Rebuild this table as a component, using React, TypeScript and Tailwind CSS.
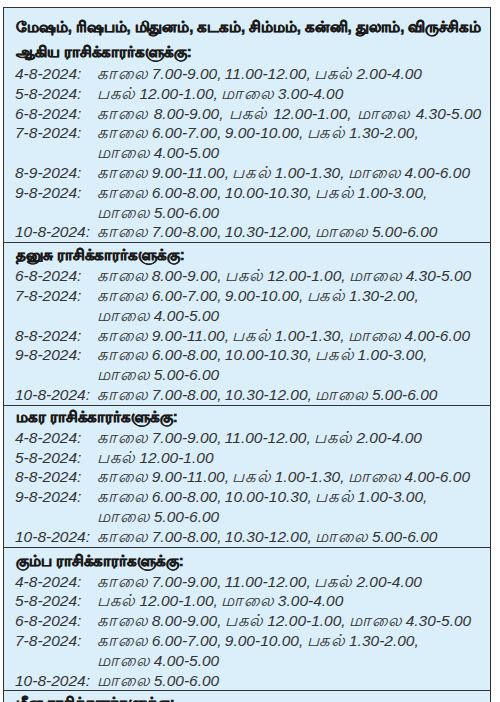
import React from 'react';

type Row = { date?: string; text: string; ws?: string };
type Section = { title: string[]; rows: Row[]; pad: string; lead: string };

const sections: Section[] = [
    {
        title: ['மேஷம், ரிஷபம், மிதுனம், கடகம், சிம்மம், கன்னி, துலாம், விருச்சிகம்', 'ஆகிய ராசிக்காரர்களுக்கு:'],
        pad: 'pt-[6px]',
        lead: 'leading-[25px]',
        rows: [
            { date: '4-8-2024:', text: 'காலை 7.00-9.00, 11.00-12.00, பகல் 2.00-4.00' },
            { date: '5-8-2024:', text: 'பகல் 12.00-1.00, மாலை 3.00-4.00' },
            { date: '6-8-2024:', text: 'காலை 8.00-9.00, பகல் 12.00-1.00, மாலை 4.30-5.00', ws: '[word-spacing:1px]' },
            { date: '7-8-2024:', text: 'காலை 6.00-7.00, 9.00-10.00, பகல் 1.30-2.00,' },
            { text: 'மாலை 4.00-5.00' },
            { date: '8-9-2024:', text: 'காலை 9.00-11.00, பகல் 1.00-1.30, மாலை 4.00-6.00' },
            { date: '9-8-2024:', text: 'காலை 6.00-8.00, 10.00-10.30, பகல் 1.00-3.00,' },
            { text: 'மாலை 5.00-6.00' },
            { date: '10-8-2024:', text: 'காலை 7.00-8.00, 10.30-12.00, மாலை 5.00-6.00' },
        ],
    },
    {
        title: ['தனுசு ராசிக்காரர்களுக்கு:'],
        pad: 'pt-[1px]',
        lead: 'leading-[22px]',
        rows: [
            { date: '6-8-2024:', text: 'காலை 8.00-9.00, பகல் 12.00-1.00, மாலை 4.30-5.00' },
            { date: '7-8-2024:', text: 'காலை 6.00-7.00, 9.00-10.00, பகல் 1.30-2.00,' },
            { text: 'மாலை 4.00-5.00' },
            { date: '8-8-2024:', text: 'காலை 9.00-11.00, பகல் 1.00-1.30, மாலை 4.00-6.00' },
            { date: '9-8-2024:', text: 'காலை 6.00-8.00, 10.00-10.30, பகல் 1.00-3.00,' },
            { text: 'மாலை 5.00-6.00' },
            { date: '10-8-2024:', text: 'காலை 7.00-8.00, 10.30-12.00, மாலை 5.00-6.00' },
        ],
    },
    {
        title: ['மகர ராசிக்காரர்களுக்கு:'],
        pad: 'pt-0',
        lead: 'leading-[22px]',
        rows: [
            { date: '4-8-2024:', text: 'காலை 7.00-9.00, 11.00-12.00, பகல் 2.00-4.00' },
            { date: '5-8-2024:', text: 'பகல் 12.00-1.00' },
            { date: '8-8-2024:', text: 'காலை 9.00-11.00, பகல் 1.00-1.30, மாலை 4.00-6.00' },
            { date: '9-8-2024:', text: 'காலை 6.00-8.00, 10.00-10.30, பகல் 1.00-3.00,' },
            { text: 'மாலை 5.00-6.00' },
            { date: '10-8-2024:', text: 'காலை 7.00-8.00, 10.30-12.00, மாலை 5.00-6.00' },
        ],
    },
    {
        title: ['கும்ப ராசிக்காரர்களுக்கு:'],
        pad: 'pt-[2px]',
        lead: 'leading-[22px]',
        rows: [
            { date: '4-8-2024:', text: 'காலை 7.00-9.00, 11.00-12.00, பகல் 2.00-4.00' },
            { date: '5-8-2024:', text: 'பகல் 12.00-1.00, மாலை 3.00-4.00' },
            { date: '6-8-2024:', text: 'காலை 8.00-9.00, பகல் 12.00-1.00, மாலை 4.30-5.00' },
            { date: '7-8-2024:', text: 'காலை 6.00-7.00, 9.00-10.00, பகல் 1.30-2.00,' },
            { text: 'மாலை 4.00-5.00' },
            { date: '10-8-2024:', text: 'மாலை 5.00-6.00' },
        ],
    },
    {
        title: ['மீன ராசிக்காரர்களுக்கு:'],
        pad: 'pt-[1px]',
        lead: 'leading-[22px]',
        rows: [{ date: '4-8-2024:', text: 'காலை 7.00-9.00, 11.00-12.00, பகல் 2.00-4.00' }],
    },
];

// Tamil words in the print are set a little larger than the digits around them
function Times({ text }: { text: string }) {
    const parts = text.split(/([\u0B80-\u0BFF]+)/);
    return (
        <>
            {parts.map((p, i) =>
                /[\u0B80-\u0BFF]/.test(p) ? (
                    <span key={i} className="text-[16.5px] tracking-[0.7px]">{p}</span>
                ) : (
                    <React.Fragment key={i}>{p}</React.Fragment>
                )
            )}
        </>
    );
}

export default function App() {
    return (
        <div className="h-[702px] overflow-hidden bg-white pt-[7px] pl-[3px] font-['Liberation_Sans','Noto_Sans',sans-serif] text-[#262626]">
            <div className="w-[488px] border border-[#333] bg-[#dbeffa]">
                {sections.map((s, i) => (
                    <section key={i} className={`border-b border-[#333] pl-[11px] pr-[8px] ${s.pad}`}>
                        {s.title.map((t, j) => (
                            <h2 key={j} className={`whitespace-nowrap pl-[1px] text-[15px] font-bold tracking-[-0.1px] text-[#1a1a1a] [-webkit-text-stroke:0.6px_#1a1a1a] ${s.lead}`}>{t}</h2>
                        ))}
                        {s.rows.map((r, j) => (
                            <div key={j} className="grid grid-cols-[84px_1fr] whitespace-nowrap text-[15.5px] italic leading-[19.8px] text-[#333]">
                                <span>{r.date ?? ''}</span>
                                <span className={`-ml-[2px] [word-spacing:-1px] ${r.ws ?? ''}`}>
                                    <Times text={r.text} />
                                </span>
                            </div>
                        ))}
                    </section>
                ))}
            </div>
        </div>
    );
}
